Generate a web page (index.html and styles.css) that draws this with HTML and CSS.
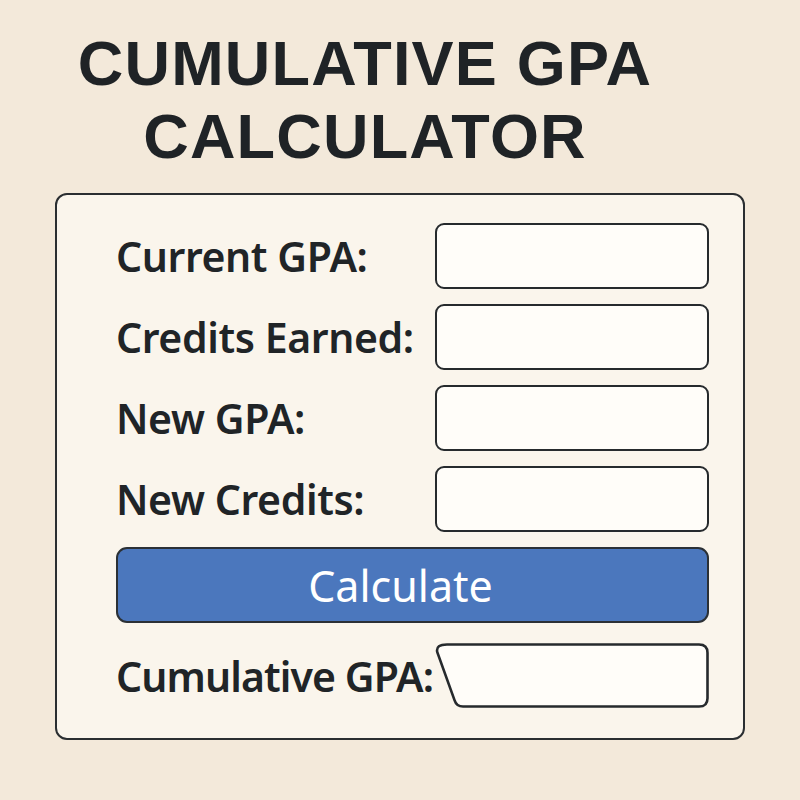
FILE: index.html
```html
<!DOCTYPE html>
<html lang="en">
<head>
    <meta charset="UTF-8">
    <meta name="viewport" content="width=device-width, initial-scale=1.0">
    <title>Cumulative GPA Calculator</title>
    <link rel="stylesheet" href="styles.css">
</head>
<body>
    <h1 class="title">CUMULATIVE GPA<br>CALCULATOR</h1>

    <div class="card">
        <div class="fields">
            <label class="label" for="curGpa">Current GPA:</label>
            <input class="field" type="text" id="curGpa">

            <label class="label" for="curCredits">Credits Earned:</label>
            <input class="field" type="text" id="curCredits">

            <label class="label" for="newGpa">New GPA:</label>
            <input class="field" type="text" id="newGpa">

            <label class="label" for="newCredits">New Credits:</label>
            <input class="field" type="text" id="newCredits">
        </div>

        <button class="btn" id="btnCalc">Calculate</button>

        <div class="result">
            <span class="label">Cumulative GPA:</span>
            <div class="output">
                <svg viewBox="0 0 274 66" preserveAspectRatio="none">
                    <path d="M12 1.5 H264 Q272.5 1.5 272.5 10 V56 Q272.5 64.5 264 64.5 H28 Q21.5 64.5 19.5 58 L2.2 9 Q0.8 1.5 12 1.5 Z"
                          fill="#fffdf9" stroke="#262a2d" stroke-width="2.6"/>
                </svg>
                <span class="value" id="result"></span>
            </div>
        </div>
    </div>

    <script>
        var btn = document.getElementById("btnCalc");

        btn.onclick = function(){
            var g1 = parseFloat(document.getElementById("curGpa").value) || 0;
            var c1 = parseFloat(document.getElementById("curCredits").value) || 0;
            var g2 = parseFloat(document.getElementById("newGpa").value) || 0;
            var c2 = parseFloat(document.getElementById("newCredits").value) || 0;

            // 总学分为0时不计算
            if (c1 + c2 == 0) {
                document.getElementById("result").innerHTML = "";
                return;
            }
            var gpa = (g1 * c1 + g2 * c2) / (c1 + c2);
            document.getElementById("result").innerHTML = gpa.toFixed(2);
        }
    </script>
</body>
</html>
```

FILE: styles.css
```css
* {
    padding: 0;
    margin: 0;
    box-sizing: border-box;
}

body {
    background: #f3e9da;
    font-family: "Noto Sans", "Liberation Sans", sans-serif;
    color: #24282b;
}

.title {
    margin: 27px 0 20px;
    padding-right: 70px;
    text-align: center;
    font-family: "Liberation Sans", Arial, sans-serif;
    font-size: 63px;
    line-height: 73px;
    font-weight: bold;
    letter-spacing: 1.2px;
    color: #1f2326;
}

.card {
    width: 690px;
    height: 547px;
    margin-left: 55px;
    padding: 28px 34px 30px 59px;
    background: #faf5ec;
    border: 2px solid #2a2e31;
    border-radius: 12px;
}

.fields {
    display: grid;
    grid-template-columns: 319px 1fr;
    grid-auto-rows: 66px;
    row-gap: 15px;
    align-items: center;
}

.label {
    font-size: 41px;
    font-weight: 600;
    letter-spacing: -0.4px;
    color: #202427;
}

.field {
    height: 66px;
    width: 100%;
    background: #fffdf9;
    border: 2.6px solid #262a2d;
    border-radius: 9px;
    outline: none;
    font: 36px "Noto Sans", sans-serif;
    padding: 0 14px;
}

.btn {
    display: block;
    width: 100%;
    height: 76px;
    margin-top: 15px;
    padding-right: 24px;
    background: #4b77bd;
    border: 2.6px solid #2b3035;
    border-radius: 11px;
    color: #fff;
    font: 43px "Noto Sans", sans-serif;
    cursor: pointer;
}

.result {
    display: flex;
    align-items: center;
    margin-top: 20px;
    height: 65px;
}

.result .label {
    width: 319px;
    white-space: nowrap;
    letter-spacing: -0.9px;
}

.output {
    flex: 1;
    height: 65px;
    position: relative;
}

.output svg {
    display: block;
    width: 100%;
    height: 100%;
}

.output .value {
    position: absolute;
    left: 34px;
    top: 0;
    line-height: 65px;
    font-size: 36px;
}
```
